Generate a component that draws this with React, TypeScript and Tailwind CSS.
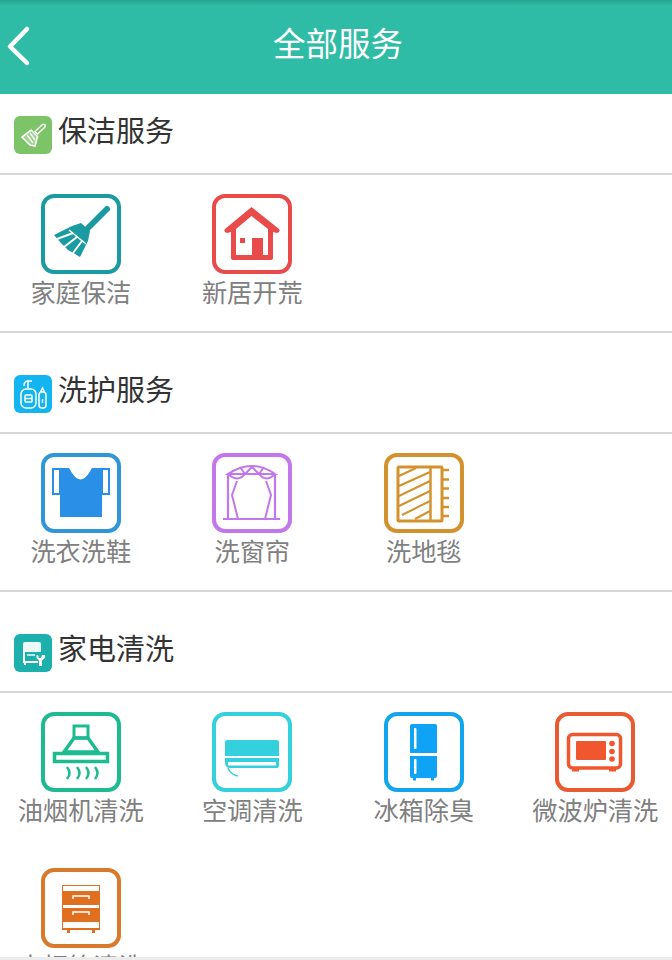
import type { ReactNode } from "react";

const FONT = "font-['Roboto','Noto_Sans_CJK_SC',sans-serif]";

function BroomSmall() {
  return (
    <svg viewBox="0 0 38 38" className="w-[38px] h-[38px]" fill="none" stroke="#fff">
      <path d="M30 8.5 Q32 9 31 11 L23.5 18 L21 15.5 L28.5 8.5 Q29 8 30 8.5 Z" strokeWidth="1.3" />
      <path d="M17 14 L23.5 20.5 L21 30 L16 29 L8 21 Z" strokeWidth="1.6" fill="#fff" fillOpacity="0.25" />
      <path d="M13 19 L19 27 M16 17 L21 24" strokeWidth="1.3" />
    </svg>
  );
}

function BottlesSmall() {
  return (
    <svg viewBox="0 0 38 38" fill="none" stroke="#fff" strokeWidth="1.5" className="w-[38px] h-[38px]">
      <path d="M10 11 Q10 6 14 6 H18 M14 6 V13" />
      <rect x="7" y="14" width="15" height="19" rx="5" />
      <rect x="11" y="20" width="7" height="7" rx="1" />
      <path d="M11 23.5 H18" />
      <rect x="25" y="17" width="7" height="16" rx="3" />
      <path d="M26.5 17 L28.5 13 L30.5 17 M28.5 24 V28" />
    </svg>
  );
}

function ApplianceSmall() {
  return (
    <svg viewBox="0 0 38 38" className="w-[38px] h-[38px]">
      <path d="M9 10 Q9 8 11 8 H25 Q27 8 27 10 V18 H9 Z" fill="#fff" fillOpacity="0.92" />
      <path d="M10 18 V28 H24" stroke="#fff" strokeWidth="2" fill="none" />
      <rect x="13" y="20" width="8" height="2" fill="#fff" fillOpacity="0.7" />
      <rect x="10" y="29" width="2" height="2" fill="#fff" />
      <path d="M24 21 L25 24 H27 L28 21 H31 V24 L28 26.5 V32 H25 V26.5 L22.5 24 V21 Z" fill="#fff" />
    </svg>
  );
}

function Broom() {
  const c = "#1a9ba1";
  return (
    <svg viewBox="0 0 80 80" fill="none" className="w-full h-full">
      <path d="M66 15 L46 35" stroke={c} strokeWidth="6" strokeLinecap="round" />
      <path d="M31 32 L40 29 L49 37 L47 47 L39 63 L34 60 L27 56 L20 49 L13 41 Z" fill={c} />
      {/* gaps between the bristle tufts */}
      <path d="M28 36 L45 50" stroke="#fff" strokeWidth="1.5" />
      <path d="M32 39 L16 45 M36 43 L23 53 M41 47 L32 59" stroke="#fff" strokeWidth="2" />
    </svg>
  );
}

function House() {
  const c = "#e94b4b";
  return (
    <svg viewBox="0 0 80 80" className="w-full h-full">
      <path d="M39.5 13 L67 35 Q69 38 65 39 L61 38 V64 Q61 66 59 66 H21 Q19 66 19 64 V38 L15 39 Q11 38 13 35 Z" fill={c} />
      <path d="M39.5 22 L24 35 V61 H56 V35 Z" fill="#fff" />
      <rect x="40" y="44" width="11" height="18" fill={c} />
      <rect x="28" y="44" width="5" height="5" fill={c} />
    </svg>
  );
}

function Shirt() {
  const c = "#2a8fe6";
  return (
    <svg viewBox="0 0 80 80" className="w-full h-full">
      <path d="M19 15 H28 L31 20 Q39.5 33 48 20 L51 15 H61 V64 H19 Z" fill={c} />
      <rect x="12" y="16" width="7" height="25" fill="#fff" stroke={c} strokeWidth="2" />
      <rect x="61" y="16" width="7" height="25" fill="#fff" stroke={c} strokeWidth="2" />
    </svg>
  );
}

function Curtain() {
  const c = "#c277ea";
  return (
    <svg viewBox="0 0 80 80" fill="none" stroke={c} strokeWidth="2" className="w-full h-full">
      <path d="M16 21 Q40 5 63 21 Z" />
      <path d="M16 21 H63 M16 21 V66 M63 21 V66 M11 66 H68" strokeWidth="2.2" />
      <path d="M28 14 L33 21 L40 14 L47 21 L52 14" />
      <path d="M16 21 Q26 30 33 21 M47 21 Q54 30 63 21" />
      <path d="M25 28 L20 42 L26 66 M54 28 L59 42 L53 66" />
    </svg>
  );
}

function Carpet() {
  const c = "#d4922f";
  return (
    <svg viewBox="0 0 80 80" fill="none" stroke={c} className="w-full h-full">
      <rect x="14" y="14" width="44" height="54" rx="1" strokeWidth="3" />
      <path d="M46.5 14 V68" strokeWidth="2.5" />
      <path d="M15 23 L32 15 M15 33 L46 19 M15 43 L46 28 M15 53 L46 38 M18 62 L46 48 M31 66 L46 58" strokeWidth="2" />
      <path d="M58 17 H65 M58 26.5 H65 M58 35.5 H65 M58 45 H65 M58 54 H65 M58 63 H65" strokeWidth="2.5" />
    </svg>
  );
}

function Hood() {
  const c = "#1dbb8f";
  return (
    <svg viewBox="0 0 80 80" fill="none" stroke={c} className="w-full h-full">
      <rect x="33" y="14" width="14" height="12" strokeWidth="3" />
      <path d="M33 26 L23 40 H57 L47 26 Z" strokeWidth="3.5" />
      <rect x="13.5" y="41.5" width="53" height="8" strokeWidth="3.5" fill="#fff" />
      <path d="M26 55 Q31 61 26 67 M36 55 Q41 61 36 67 M45 55 Q50 61 45 67 M54 55 Q59 61 54 67" strokeWidth="2.5" />
    </svg>
  );
}

function AirCon() {
  const c = "#35d0de";
  return (
    <svg viewBox="0 0 80 80" className="w-full h-full">
      <path d="M13 30 Q13 28 15 28 H65 Q67 28 67 30 V44 H13 Z" fill={c} />
      <path d="M13 46 H67 V54 Q67 56 65 56 H18 Q13 56 13 50 Z" fill={c} />
      <rect x="16" y="50" width="48" height="3.5" fill="#fff" />
      <path d="M16 56 Q19 63 26 64" stroke={c} strokeWidth="1.5" fill="none" />
    </svg>
  );
}

function Fridge() {
  const c = "#0fa3f5";
  return (
    <svg viewBox="0 0 80 80" className="w-full h-full">
      <path d="M26 14 Q26 12 28 12 H51 Q53 12 53 14 V41 H26 Z" fill={c} />
      <path d="M26 44 H53 V64 Q53 66 51 66 H28 Q26 66 26 64 Z" fill={c} />
      <rect x="29" y="66" width="3" height="2.5" fill={c} />
      <rect x="47" y="66" width="3" height="2.5" fill={c} />
      <rect x="30" y="16" width="2.5" height="21" rx="1" fill="#fff" />
      <rect x="30" y="47" width="2.5" height="15" rx="1" fill="#fff" />
    </svg>
  );
}

function Microwave() {
  const c = "#f0572e";
  return (
    <svg viewBox="0 0 80 80" className="w-full h-full">
      <rect x="13.5" y="22.5" width="52" height="33.5" rx="4" fill="#fff" stroke={c} strokeWidth="3.5" />
      <rect x="21" y="29" width="30" height="19" rx="1" fill={c} />
      <circle cx="57" cy="31.5" r="2.8" fill={c} />
      <circle cx="57" cy="39.5" r="2.8" fill={c} />
      <circle cx="57" cy="47" r="2.8" fill={c} />
      <rect x="17" y="57" width="7" height="2.5" fill={c} />
      <rect x="54" y="57" width="7" height="2.5" fill={c} />
    </svg>
  );
}

function Cabinet() {
  const c = "#e06f20";
  return (
    <svg viewBox="0 0 80 80" className="w-full h-full">
      <rect x="21" y="17" width="38" height="45" fill={c} />
      <rect x="22" y="18" width="36" height="5" fill="#fff" />
      <rect x="22" y="37" width="36" height="3" fill="#fff" />
      <rect x="22" y="54" width="36" height="6" fill="#fff" />
      <path d="M32 31 V28 H48 V31 M32 47 V44 H48 V47" stroke="#fff" strokeWidth="1.5" fill="none" />
      <rect x="26" y="62" width="3" height="3" fill={c} />
      <rect x="51" y="62" width="3" height="3" fill={c} />
    </svg>
  );
}

type Item = { label: string; border: string; icon: ReactNode };

type Group = { title: string; badge: string; badgeIcon: ReactNode; items: Item[] };

const groups: Group[] = [
  {
    title: "保洁服务",
    badge: "bg-[#7dc468]",
    badgeIcon: <BroomSmall />,
    items: [
      { label: "家庭保洁", border: "border-[#1a9ba1]", icon: <Broom /> },
      { label: "新居开荒", border: "border-[#e94b4b]", icon: <House /> },
    ],
  },
  {
    title: "洗护服务",
    badge: "bg-[#12b5f0]",
    badgeIcon: <BottlesSmall />,
    items: [
      { label: "洗衣洗鞋", border: "border-[#2f96d8]", icon: <Shirt /> },
      { label: "洗窗帘", border: "border-[#c277ea]", icon: <Curtain /> },
      { label: "洗地毯", border: "border-[#d4922f]", icon: <Carpet /> },
    ],
  },
  {
    title: "家电清洗",
    badge: "bg-[#1bb0ac]",
    badgeIcon: <ApplianceSmall />,
    items: [
      { label: "油烟机清洗", border: "border-[#1dbb8f]", icon: <Hood /> },
      { label: "空调清洗", border: "border-[#35d0de]", icon: <AirCon /> },
      { label: "冰箱除臭", border: "border-[#12a5ec]", icon: <Fridge /> },
      { label: "微波炉清洗", border: "border-[#ea5a30]", icon: <Microwave /> },
      { label: "大柜箱清洗", border: "border-[#d9792c]", icon: <Cabinet /> },
    ],
  },
];

function Service({ item }: { item: Item }) {
  return (
    <div className="flex flex-col items-center h-[156px] pt-[19px]">
      <div className={`w-20 h-20 shrink-0 rounded-[13px] border-[4px] box-border overflow-hidden ${item.border}`}>
        <div className="-m-[4px] w-20 h-20">{item.icon}</div>
      </div>
      <span className="text-[25.2px] leading-[40px] text-[#808080] whitespace-nowrap">{item.label}</span>
    </div>
  );
}

export default function App() {
  return (
    <div className={`relative w-[672px] h-[960px] overflow-hidden bg-white ${FONT}`}>
      <header className="relative h-[94px] flex items-center justify-center bg-gradient-to-b from-[#27a592] to-[#2fbca6] to-[6%] pl-[4px]">
        {/* back chevron */}
        <svg viewBox="0 0 30 44" className="absolute left-[3px] top-[24px] w-[30px] h-[44px]" fill="none">
          <path d="M24 5 L7 22.5 L24 39" stroke="#fff" strokeWidth="4.5" strokeLinecap="round" strokeLinejoin="round" />
        </svg>
        <h1 className="text-[32.5px] leading-none text-white font-normal -mt-[3px]">全部服务</h1>
      </header>
      {groups.map((g, i) => (
        <section key={g.title}>
          <div className={`flex items-end gap-[6px] pl-[14px] pb-[19px] border-b-2 border-[#d6d6d6] ${i === 0 ? "h-[81px]" : "h-[101px]"}`}>
            <div className={`w-[38px] h-[38px] rounded-[6px] ${g.badge}`}>{g.badgeIcon}</div>
            <span className="text-[29px] leading-[38px] text-[#333] -translate-y-[3px]">{g.title}</span>
          </div>
          <div className="grid grid-cols-[repeat(4,171.5px)] -ml-[5px] border-b-2 border-[#d6d6d6]">
            {g.items.map((it) => (
              <Service key={it.label} item={it} />
            ))}
          </div>
        </section>
      ))}
      {/* bottom bar edge lying over the scrolled list */}
      <div className="absolute left-0 right-0 bottom-0 h-[3px] bg-[#ececec]" />
    </div>
  );
}
